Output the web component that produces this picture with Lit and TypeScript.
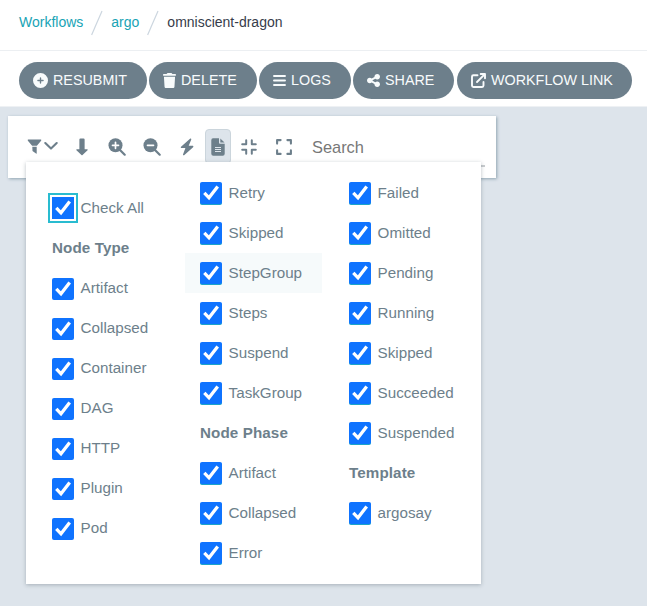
import { LitElement, html, css, svg } from "lit";
import { customElement, property } from "lit/decorators.js";

const icons: Record<string, { w: number; h: number; box: string; art: unknown }> = {
  plus: { w: 15, h: 15, box: "0 0 512 512", art: svg`<path d="M256 512A256 256 0 1 0 256 0a256 256 0 1 0 0 512zM232 344V280H168c-13.300 0-24-10.700-24-24s10.700-24 24-24h64V168c0-13.300 10.700-24 24-24s24 10.700 24 24v64h64c13.300 0 24 10.700 24 24s-10.700 24-24 24H280v64c0 13.300-10.700 24-24 24s-24-10.700-24-24z"/>` },
  trash: { w: 13, h: 15, box: "0 0 448 512", art: svg`<path d="M135.200 17.700L128 32H32C14.300 32 0 46.300 0 64S14.300 96 32 96H416c17.700 0 32-14.300 32-32s-14.300-32-32-32H320l-7.200-14.300C307.400 6.800 296.300 0 284.200 0H163.800c-12.100 0-23.200 6.800-28.600 17.700zM416 128H32L53.200 467c1.600 25.300 22.600 45 47.900 45H346.900c25.300 0 46.300-19.700 47.900-45L416 128z"/>` },
  bars: { w: 13, h: 15, box: "0 0 13 15", art: svg`<path d="M1 3h11M1 7.500h11M1 12h11" fill="none" stroke="currentColor" stroke-width="1.900" stroke-linecap="round"/>` },
  share: { w: 13, h: 15, box: "0 0 448 512", art: svg`<path d="M352 224c53 0 96-43 96-96s-43-96-96-96s-96 43-96 96c0 4 .2 8 .7 11.900l-94.100 47C145.400 170.200 121.900 160 96 160c-53 0-96 43-96 96s43 96 96 96c25.900 0 49.400-10.200 66.600-26.900l94.100 47c-.5 3.900-.7 7.800-.7 11.900c0 53 43 96 96 96s96-43 96-96s-43-96-96-96c-25.900 0-49.400 10.200-66.600 26.900l-94.100-47c.5-3.900 .7-7.800 .7-11.900s-.2-8-.7-11.900l94.100-47C302.600 213.800 326.100 224 352 224z"/>` },
  external: { w: 15, h: 15, box: "0 0 15 15", art: svg`<path d="M6.500 2.300H2.400q-1.400 0-1.400 1.400v8.900q0 1.400 1.400 1.400h8.700q1.400 0 1.400-1.400V8.900M9.700 1H14v4.300M13.600 1.400L6 9" fill="none" stroke="currentColor" stroke-width="1.900" stroke-linecap="round" stroke-linejoin="round"/>` },
  filter: { w: 15, h: 15, box: "0 0 15 15", art: svg`<path d="M1 .5h13q.6.5.1 1.200L9.900 6.700H5.100L.9 1.700Q.4 1 1 .5zM5.300 7.800h4.400v6.700q-.3.400-.7.100L5.500 12z"/>` },
  chevron: { w: 14, h: 15, box: "0 0 14 15", art: svg`<path d="M1.300 4l5.700 5.600L12.700 4" fill="none" stroke="currentColor" stroke-width="2.100" stroke-linecap="round" stroke-linejoin="round"/>` },
  down: { w: 12, h: 18, box: "0 0 11 18", art: svg`<path d="M4.100.5h2.800q1 0 1 1v9.800h2.300q.9.200.4 1L6 17q-.5.500-1 0L.4 12.300q-.5-.8.400-1h2.300V1.500q0-1 1-1z"/>` },
  zoomin: { w: 18, h: 18, box: "0 0 18 18", art: svg`<circle cx="7.500" cy="7.300" r="7"/><path d="M12 12l4.700 4.700" stroke="currentColor" stroke-width="2.200" stroke-linecap="round"/><path d="M7.500 4.300v6M4.500 7.300h6" stroke="#fff" stroke-width="1.700" stroke-linecap="round"/>` },
  zoomout: { w: 18, h: 18, box: "0 0 18 18", art: svg`<circle cx="7.500" cy="7.300" r="7"/><path d="M12 12l4.700 4.700" stroke="currentColor" stroke-width="2.200" stroke-linecap="round"/><path d="M4.500 7.300h6" stroke="#fff" stroke-width="1.700" stroke-linecap="round"/>` },
  bolt: { w: 14, h: 18, box: "0 0 14 18", art: svg`<path d="M10.300.6L1 8.700q-.7.900.2 1.300h4.200L3 16.400q0 1.300 1.100.8l9-8q.8-1-.2-1.400H8.700l2.600-6.200q0-1.300-1-1z"/>` },
  file: { w: 14, h: 18, box: "0 0 14 18", art: svg`<path d="M2 .3h6v4.500q0 1 1 1h4.700v10q0 2-2 2H2.300q-2 0-2-2v-13.500Q.3.300 2 .3z"/><path d="M9.300.4v4.200h4.200z"/><path d="M4 9.500h6M4 11.500h6M4 13.500h6" stroke="#dde4eb" stroke-width="1"/>` },
  compress: { w: 16, h: 16, box: "0 0 16 16", art: svg`<path d="M1.200 5.200h4V1.200M10.800 1.200v4h4M1.200 10.800h4v4M10.800 14.800v-4h4" fill="none" stroke="currentColor" stroke-width="2" stroke-linecap="round" stroke-linejoin="round"/>` },
  expand: { w: 16, h: 16, box: "0 0 16 16", art: svg`<path d="M1.100 4.600V1.100h3.500M11.400 1.100h3.500v3.500M1.100 11.400v3.500h3.500M11.400 14.900h3.500v-3.500" fill="none" stroke="currentColor" stroke-width="2.100" stroke-linecap="round" stroke-linejoin="round"/>` },
};

const icon = (name: string) => {
  const i = icons[name];
  return html`<svg class="icon" width=${i.w} height=${i.h} viewBox=${i.box} preserveAspectRatio="none" fill="currentColor">${i.art}</svg>`;
};

@customElement("filter-item")
export class FilterItem extends LitElement {
  @property() label = "";
  @property({ type: Boolean }) focused = false;
  @property({ type: Boolean }) heading = false;
  @property({ type: Boolean }) tinted = false;

  static styles = css`
    :host { display: block; height: 40px; }
    .row { display: flex; height: 40px; align-items: center; padding: 0 15px 2px; box-sizing: border-box; white-space: nowrap; }
    .heading { font-weight: bold; letter-spacing: .1px; }
    .check { display: block; flex: none; width: 22px; height: 22px; margin: 4px 6.600px 0 0; border-radius: 2px; background: #0f73ff; }
    .tinted { margin-top: 2px; box-shadow: 0 1px 0 #1ba5c9; }
    .focused { margin-top: 2px; border-radius: 0; outline: 2px solid #29bcd0; outline-offset: 2px; }
  `;

  render() {
    if (this.heading) return html`<div class="row heading">${this.label}</div>`;
    return html`<div class="row">
      <svg class="check ${this.focused ? "focused" : this.tinted ? "tinted" : ""}" viewBox="0 0 22 22">
        <path d="M4.300 10.900l4.700 4.900L17.700 4.400" fill="none" stroke="#fff" stroke-width="3.300" />
      </svg><span>${this.label}</span>
    </div>`;
  }
}

const columns = [
  ["Check All", "#Node Type", "Artifact", "Collapsed", "Container", "DAG", "HTTP", "Plugin", "Pod"],
  ["Retry", "Skipped", "StepGroup", "Steps", "Suspend", "TaskGroup", "#Node Phase", "Artifact", "Collapsed", "Error"],
  ["Failed", "Omitted", "Pending", "Running", "Skipped", "Succeeded", "Suspended", "#Template", "argosay"],
];

@customElement("app-root")
export class AppRoot extends LitElement {
  static styles = css`
    :host { display: flex; flex-direction: column; height: 606px; overflow: hidden; background: #dde4eb; font-family: "Liberation Sans", Arial, sans-serif; color: #6d7f8b; }
    .icon { display: block; flex: none; }
    .crumbs { display: flex; align-items: center; height: 50px; box-sizing: border-box; padding: 0 19px 5px; background: #fff; font-size: 14px; line-height: 16px; color: #363c4a; }
    .crumbs a, .crumbs span { margin-bottom: 2px; }
    .crumbs a { color: #18a3b5; }
    .slash { display: block; flex: none; margin: 0 8px; }
    .actions { display: flex; height: 57px; box-sizing: border-box; padding: 11px 0 0 19px; background: #fff; border-top: 1px solid #eceff2; border-bottom: 1px solid #eef1f4; }
    .btn { display: flex; align-items: center; box-sizing: border-box; height: 37px; margin-right: 2px; padding: 0 0 1px 14px; border-radius: 19px; background: #6d7f8b; color: #f8fbfc; font-size: 14.350px; white-space: nowrap; }
    .btn .icon { margin-right: 5px; }
    .w128 { width: 128px; } .w108 { width: 108px; } .w92 { width: 92px; } .w101 { width: 101px; margin-right: 3px; } .w175 { width: 175px; }
    .canvas { position: relative; flex: 1; padding: 9px 8px; }
    .tools { display: flex; align-items: flex-start; width: 488px; height: 62px; box-sizing: border-box; padding: 13px 11px 0 16px; background: #fff; box-shadow: 1px 1px 3px #8fa4b1; }
    .tool { display: flex; align-items: center; justify-content: center; width: 26px; height: 35px; margin-right: 9px; box-sizing: border-box; }
    .filter { width: 36px; margin-right: 9px; gap: 2px; }
    .on { border: 1px solid #cbd5dc; border-radius: 4px; background: #dde4eb; }
    .before-on, .on { margin-right: 5px; }
    .search { flex: 1; height: 36px; margin-left: 6px; border-bottom: 2px solid #c9cccf; font-size: 16.400px; line-height: 36px; color: #777; }
    .menu { position: absolute; left: 26px; top: 55px; width: 455px; height: 422px; box-sizing: border-box; padding: 11px 10px 0 11px; display: grid; grid-template-columns: 148px 149px 137px; align-items: start; background: #fff; box-shadow: 0 1px 4px rgba(80,95,105,.4); font-size: 15.200px; }
    .col { width: 137px; }
    .first { padding-top: 15px; }
    .hover { background: #f6fafb; }
  `;

  render() {
    const slash = html`<svg class="slash" width="12" height="26" viewBox="0 0 12 26"><path d="M.6 25L11 1" stroke="#ccd6df" stroke-width="1.200" /></svg>`;
    const button = (i: string, label: string, size: string) => html`<div class="btn ${size}">${icon(i)}<span>${label}</span></div>`;
    const tool = (i: string, extra = "") => html`<div class="tool ${extra}">${icon(i)}</div>`;
    return html`
      <nav class="crumbs"><a>Workflows</a>${slash}<a>argo</a>${slash}<span>omniscient-dragon</span></nav>
      <div class="actions">
        ${button("plus", "RESUBMIT", "w128")}${button("trash", "DELETE", "w108")}${button("bars", "LOGS", "w92")}
        ${button("share", "SHARE", "w101")}${button("external", "WORKFLOW LINK", "w175")}
      </div>
      <main class="canvas">
        <div class="tools">
          <div class="tool filter">${icon("filter")}${icon("chevron")}</div>
          ${["down", "zoomin", "zoomout"].map((n) => tool(n))}
          ${tool("bolt", "before-on")}${tool("file", "on")}${tool("compress")}${tool("expand")}
          <div class="search">Search</div>
        </div>
        <div class="menu">
          ${columns.map((items, c) => html`<div class="col ${c === 0 ? "first" : ""}">
            ${items.map((t) => html`<filter-item class=${t === "StepGroup" ? "hover" : ""} .label=${t.replace("#", "")}
              ?heading=${t.startsWith("#")} ?focused=${t === "Check All"} ?tinted=${c > 0}></filter-item>`)}
          </div>`)}
        </div>
      </main>`;
  }
}
